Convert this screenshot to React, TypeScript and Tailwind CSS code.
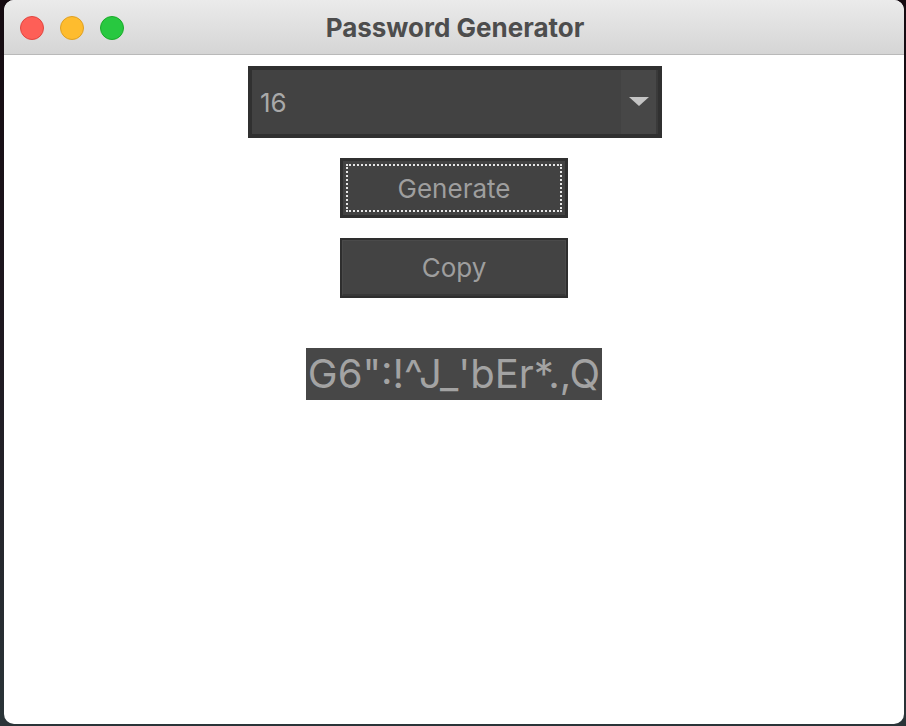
import { useState } from "react"

const App = () => {
  const [length] = useState("16")
  const [password] = useState("G6\":!^J_'bEr*.,Q")

  return (
    <div
      className="w-[906px] h-[726px] overflow-hidden bg-gradient-to-b from-[#140a10] via-[#1f1a22] to-[#2a3438] pl-[4px] pr-[2px] pb-[2px]"
      style={{ fontFamily: "Inter, 'Liberation Sans', sans-serif" }}
    >
      <div className="w-[900px] h-[724px] rounded-[10px] overflow-hidden bg-white flex flex-col">
        <div className="h-[55px] shrink-0 relative flex items-center justify-center bg-gradient-to-b from-[#ebebeb] to-[#d5d5d5] border-b border-[#b9b9b9]">
          <div className="absolute left-[16px] top-[16px] flex gap-[16px]">
            <span className="w-[24px] h-[24px] rounded-full bg-[#fe5f57] border border-[#e14640]" />
            <span className="w-[24px] h-[24px] rounded-full bg-[#febc2e] border border-[#dfa023]" />
            <span className="w-[24px] h-[24px] rounded-full bg-[#28c840] border border-[#1aab29]" />
          </div>
          <span className="text-[26px] font-bold text-[#4d4d4d] ml-[2px] mt-[1px]">Password Generator</span>
        </div>

        <div className="flex flex-col items-center pt-[11px]">
          <div className="ml-[2px] w-[414px] h-[72px] bg-[#303030] p-[4px] flex">
            <div className="flex-1 bg-[#424242] flex items-center pl-[8px] text-[26px] text-[#a9a9a9]">
              {length}
            </div>
            <div className="w-[37px] bg-[#474747] border-r-[2px] border-[#3a3a3a] flex items-center justify-center">
              <svg width="20" height="10" viewBox="0 0 20 10">
                <path d="M0 0 L20 0 L10 9 Z" fill="#c4c4c4" />
              </svg>
            </div>
          </div>

          <button className="mt-[20px] w-[228px] h-[60px] bg-[#303030] p-[3px]">
            <div className="w-full h-full bg-[#424242] p-[3px]">
              <div className="w-full h-full border-2 border-dotted border-[#e6e6e6] flex items-center justify-center text-[26px] text-[#9e9e9e]">
                Generate
              </div>
            </div>
          </button>

          <button className="mt-[20px] w-[228px] h-[60px] bg-[#2e2e2e] p-[2px]">
            <div className="w-full h-full bg-[#434343] border-t border-l border-r border-[#4a4a4a] border-b-2 border-b-[#383838] flex items-center justify-center text-[26px] text-[#9e9e9e]">
              Copy
            </div>
          </button>

          <div className="mt-[50px] h-[52px] px-[2px] bg-[#474747] flex items-center text-[40px] text-[#a3a3a3] leading-none">
            {password}
          </div>
        </div>
      </div>
    </div>
  )
}

export default App
